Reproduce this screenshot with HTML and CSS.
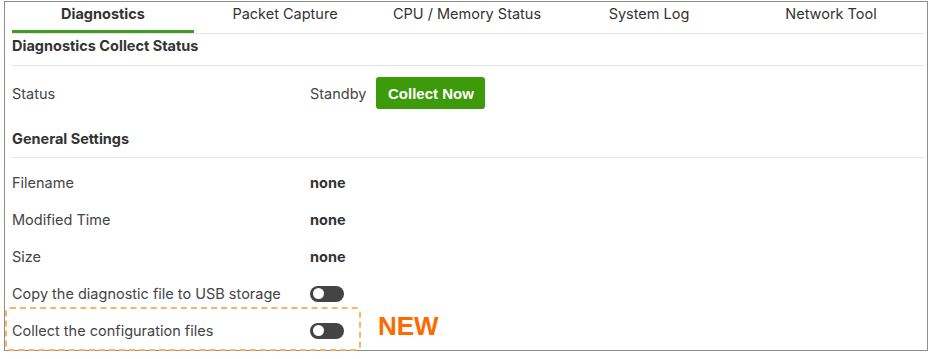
FILE: index.html
```html
<!DOCTYPE html>
<html lang="en">
<head>
  <meta charset="UTF-8" />
  <title>Diagnostics</title>
  <link rel="stylesheet" href="styles.css">
</head>
<body>
  <div class="frame">
    <div class="tabs">
      <div class="tab active">Diagnostics</div>
      <div class="tab">Packet Capture</div>
      <div class="tab">CPU / Memory Status</div>
      <div class="tab">System Log</div>
      <div class="tab">Network Tool</div>
    </div>

    <div class="section-title">Diagnostics Collect Status</div>
    <div class="row status-row">
      <span class="label">Status</span>
      <span class="value plain">Standby</span>
      <button class="collect-btn">Collect Now</button>
    </div>

    <div class="section-title second">General Settings</div>
    <div class="list">
      <div class="row"><span class="label">Filename</span><span class="value">none</span></div>
      <div class="row"><span class="label">Modified Time</span><span class="value">none</span></div>
      <div class="row"><span class="label">Size</span><span class="value">none</span></div>
      <div class="row"><span class="label">Copy the diagnostic file to USB storage</span><span class="toggle"></span></div>
      <div class="row"><span class="label">Collect the configuration files</span><span class="toggle"></span></div>
    </div>
  </div>

  <div class="highlight"></div>
  <div class="new-tag">NEW</div>
</body>
</html>
```

FILE: styles.css
```css
body {
  margin: 0;
  font-family: Inter, "Noto Sans", sans-serif;
  color: #333;
  background: #fff;
  position: relative;
  width: 931px;
  height: 359px;
  overflow: hidden;
}
.frame {
  margin: 1px 0 0 4px;
  width: 924px;
  height: 350px;
  border: 1px solid #8e8e8e;
  padding-left: 7px;
  box-sizing: border-box;
}
.tabs {
  display: grid;
  grid-template-columns: repeat(5, 182px);
  height: 31px;
  border-bottom: 1px solid #e4e4e4;
  margin-right: 3px;
}
.tab {
  text-align: center;
  white-space: nowrap;
  font-size: 14.5px;
  line-height: 24px;
  color: #333;
}
.tab.active {
  font-weight: 700;
  border-bottom: 3px solid #3f9e1f;
  box-sizing: border-box;
  height: 31px;
}
.section-title {
  font-size: 14.5px;
  font-weight: 700;
  line-height: 24px;
  border-bottom: 1px solid #e4e4e4;
  margin-right: 3px;
  box-sizing: border-box;
  height: 32px;
}
.section-title.second {
  margin-top: 7px;
  height: 31px;
}
.row {
  display: flex;
  align-items: center;
  height: 37px;
  font-size: 14.5px;
}
.status-row {
  height: 54px;
}
.label {
  width: 298px;
  color: #444;
}
.value {
  font-weight: 700;
  color: #333;
}
.value.plain {
  font-weight: 400;
  color: #444;
}
.collect-btn {
  margin-left: 10px;
  width: 109px;
  height: 32px;
  border: none;
  border-radius: 3px;
  background: #3d9b0b;
  color: #fff;
  font-family: "Liberation Sans", Arial, sans-serif;
  font-weight: 700;
  font-size: 15px;
}
.list {
  padding-top: 6px;
}
.toggle {
  position: relative;
  width: 34px;
  height: 16px;
  border-radius: 8px;
  background: #444;
}
.toggle::after {
  content: "";
  position: absolute;
  left: 3px;
  top: 2.5px;
  width: 11px;
  height: 11px;
  border-radius: 50%;
  background: #fff;
}
.highlight {
  position: absolute;
  left: 5px;
  top: 307px;
  width: 352px;
  height: 40px;
  border: 2px dashed #f9b366;
  border-radius: 5px;
}
.new-tag {
  position: absolute;
  left: 378px;
  top: 311px;
  font-family: "Liberation Sans", Arial, sans-serif;
  font-weight: 700;
  font-size: 26px;
  color: #ff6a00;
}
```
